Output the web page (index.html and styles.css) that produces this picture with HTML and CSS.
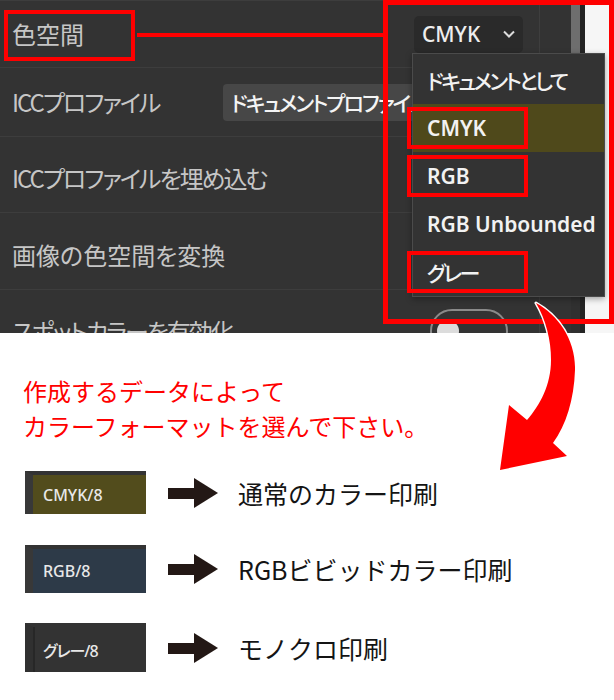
FILE: index.html
```html
<!DOCTYPE html>
<html lang="ja">
<head>
<meta charset="utf-8">
<title>カラーフォーマット</title>
<link rel="stylesheet" href="styles.css">
</head>
<body>
<div class="page">
  <div class="panel">
    <div class="settings">
      <div class="row r1">
        <span class="label">色空間</span>
        <div class="select"><span>CMYK</span><svg class="chev" width="12" height="8" viewBox="0 0 12 8"><polyline points="1,1.5 6,6.5 11,1.5" fill="none" stroke="#dcdcdc" stroke-width="2"/></svg></div>
      </div>
      <div class="row r2">
        <span class="label label-fixed tight">ICCプロファイル</span>
        <div class="field">ドキュメントプロファイル</div>
      </div>
      <div class="row r3"><span class="label tight">ICCプロファイルを埋め込む</span></div>
      <div class="row r4"><span class="label">画像の色空間を変換</span></div>
      <div class="row r5">
        <span class="label tight">スポットカラーを有効化</span>
        <div class="toggle"><span class="knob"></span></div>
      </div>
    </div>
    <div class="gutter"><div class="track"><div class="thumb"></div></div><div class="track-edge"></div></div>
    <div class="edge"></div>

    <ul class="menu">
      <li class="jp">ドキュメントとして</li>
      <li class="on">CMYK</li>
      <li>RGB</li>
      <li>RGB Unbounded</li>
      <li class="jp">グレー</li>
    </ul>

    <div class="mark mark-label"></div>
    <div class="mark-line"></div>
    <div class="mark mark-menu"></div>
    <div class="mark mark-cmyk"></div>
    <div class="mark mark-rgb"></div>
    <div class="mark mark-gray"></div>
  </div>

  <div class="guide">
    <p class="note">作成するデータによって<br>カラーフォーマットを選んで下さい。</p>
    <div class="legend">
      <div class="item i1">
        <div class="swatch sw-cmyk">CMYK/8</div>
        <svg class="arrow" width="50" height="30" viewBox="0 0 50 30"><rect x="0" y="10" width="27" height="11" fill="#231815"/><polygon points="26,0 50,15 26,30" fill="#231815"/></svg>
        <span class="desc">通常のカラー印刷</span>
      </div>
      <div class="item i2">
        <div class="swatch sw-rgb">RGB/8</div>
        <svg class="arrow" width="50" height="30" viewBox="0 0 50 30"><rect x="0" y="10" width="27" height="11" fill="#231815"/><polygon points="26,0 50,15 26,30" fill="#231815"/></svg>
        <span class="desc">RGBビビッドカラー印刷</span>
      </div>
      <div class="item i3">
        <div class="swatch sw-gray">グレー/8</div>
        <svg class="arrow" width="50" height="30" viewBox="0 0 50 30"><rect x="0" y="10" width="27" height="11" fill="#231815"/><polygon points="26,0 50,15 26,30" fill="#231815"/></svg>
        <span class="desc">モノクロ印刷</span>
      </div>
    </div>
  </div>

  <svg class="curve" width="614" height="700" viewBox="0 0 614 700">
    <path d="M536,303 C558,315 576,340 575,370 C574,400 566,425 553,443 L567,456 L500,470 L509,405 L527,420 C540,405 551,385 551,360 C551,340 546,320 536,303 Z" fill="#ff0000" stroke="#ffffff" stroke-width="3" stroke-linejoin="round" paint-order="stroke"/>
  </svg>
</div>
</body>
</html>
```

FILE: styles.css
```css
* {
  box-sizing: border-box;
  margin: 0;
  padding: 0;
}

body {
  margin: 0;
  background: #ffffff;
  font-family: "Noto Sans CJK JP", "Noto Sans", sans-serif;
}

.page {
  position: relative;
  width: 614px;
  height: 700px;
  overflow: hidden;
}

/* ---------- dark settings panel ---------- */
.panel {
  position: relative;
  display: flex;
  height: 333px;
  background: #333333;
}

.settings {
  width: 539px;
  display: flex;
  flex-direction: column;
  overflow: hidden;
}

.row {
  flex: none;
  display: flex;
  align-items: center;
  justify-content: space-between;
  padding: 0 16px 0 12px;
  border-top: 1px solid #3d3d3d;
}

.r1 { height: 67px; }
.r2 { height: 69px; justify-content: flex-start; }
.r3 { height: 76px; padding-top: 6px; }
.r4 { height: 77px; padding-top: 8px; }
.r5 { height: 82px; }

.label {
  font-size: 24px;
  line-height: 32px;
  color: #c6c6c6;
  font-feature-settings: "palt";
  white-space: nowrap;
}

.tight {
  letter-spacing: -2px;
}

.label-fixed {
  flex: 0 0 211px;
}

.select {
  width: 109px;
  height: 37px;
  background: #2a2a2a;
  border-radius: 5px;
  display: flex;
  align-items: center;
  justify-content: space-between;
  padding: 0 8px;
  color: #eeeeee;
  font-family: "Noto Sans", "Noto Sans CJK JP", sans-serif;
  font-weight: 500;
  font-size: 21px;
}

.chev {
  display: block;
}

.field {
  width: 300px;
  height: 37px;
  background: #474747;
  border-radius: 4px;
  padding-left: 8px;
  display: flex;
  align-items: center;
  color: #f4f4f4;
  font-size: 21px;
  font-weight: 500;
  letter-spacing: -2px;
  white-space: nowrap;
  overflow: hidden;
  font-feature-settings: "palt";
}

.toggle {
  width: 78px;
  height: 44px;
  margin-right: 15px;
  border: 2px solid #8a8a8a;
  border-radius: 22px;
  display: flex;
  align-items: center;
  padding-left: 5px;
}

.knob {
  width: 22px;
  height: 22px;
  border-radius: 50%;
  background: #dcdcdc;
}

.gutter {
  width: 46px;
  border-left: 1px solid #3e3e3e;
  display: flex;
  justify-content: flex-end;
}

.track {
  width: 9px;
  background: #303030;
}

.thumb {
  height: 170px;
  background: #6e6e6e;
}

.track-edge {
  width: 5px;
  background: #242424;
}

.edge {
  flex: 1;
  background: #f6f6f6;
}

/* ---------- open dropdown ---------- */
.menu {
  position: absolute;
  left: 412px;
  top: 53px;
  width: 193px;
  height: 244px;
  background: #333333;
  border: 1px solid #4b4b4b;
  padding-top: 2px;
  list-style: none;
  box-shadow: 0 2px 6px rgba(0, 0, 0, 0.35);
}

.menu li {
  height: 48px;
  display: flex;
  align-items: center;
  padding-left: 14px;
  font-family: "Noto Sans", "Noto Sans CJK JP", sans-serif;
  font-weight: 600;
  font-size: 21px;
  color: #f2f2f2;
  font-feature-settings: "palt";
  white-space: nowrap;
}

.menu li.jp {
  font-weight: 500;
  letter-spacing: -2.5px;
}

.menu li.on {
  background: #4f491b;
}

/* ---------- red annotations ---------- */
.mark {
  position: absolute;
  border: 4px solid #ff0000;
}

.mark-label { left: 4px; top: 10px; width: 131px; height: 51px; }
.mark-menu { left: 383px; top: 0; width: 231px; height: 324px; border-width: 5px; }
.mark-cmyk { left: 407px; top: 107px; width: 121px; height: 42px; }
.mark-rgb { left: 407px; top: 155px; width: 121px; height: 42px; }
.mark-gray { left: 407px; top: 251px; width: 121px; height: 42px; }

.mark-line {
  position: absolute;
  left: 137px;
  top: 33px;
  width: 246px;
  height: 4px;
  background: #ff0000;
}

.curve {
  position: absolute;
  left: 0;
  top: 0;
  pointer-events: none;
}

/* ---------- explanation ---------- */
.guide {
  padding: 40px 0 0 23px;
}

.note {
  font-size: 24px;
  line-height: 35px;
  color: #ff0000;
}

.legend {
  margin-top: 28px;
  display: flex;
  flex-direction: column;
}

.item {
  display: flex;
  align-items: center;
}

.i1 { height: 43px; }
.i2 { height: 48px; margin-top: 31px; }
.i3 { height: 49px; margin-top: 30px; }

.swatch {
  width: 121px;
  height: 100%;
  margin-left: 2px;
  display: flex;
  align-items: center;
  padding-left: 10px;
  border-left: 8px solid #383838;
  border-top: 4px solid #333333;
  font-family: "Noto Sans", "Noto Sans CJK JP", sans-serif;
  font-weight: 500;
  font-size: 16px;
  color: #e8e8e8;
  font-feature-settings: "palt";
}

.sw-cmyk { background: #524c1c; }
.sw-rgb { background: #2d3a48; }
.sw-gray {
  background: #333333;
  border-left: 8px solid #303030;
  box-shadow: inset 2px 0 0 #272727;
  letter-spacing: -1px;
}

.arrow {
  display: block;
  margin-left: 22px;
}

.desc {
  margin-left: 20px;
  font-size: 25px;
  line-height: 34px;
  color: #141414;
  white-space: nowrap;
}
```
